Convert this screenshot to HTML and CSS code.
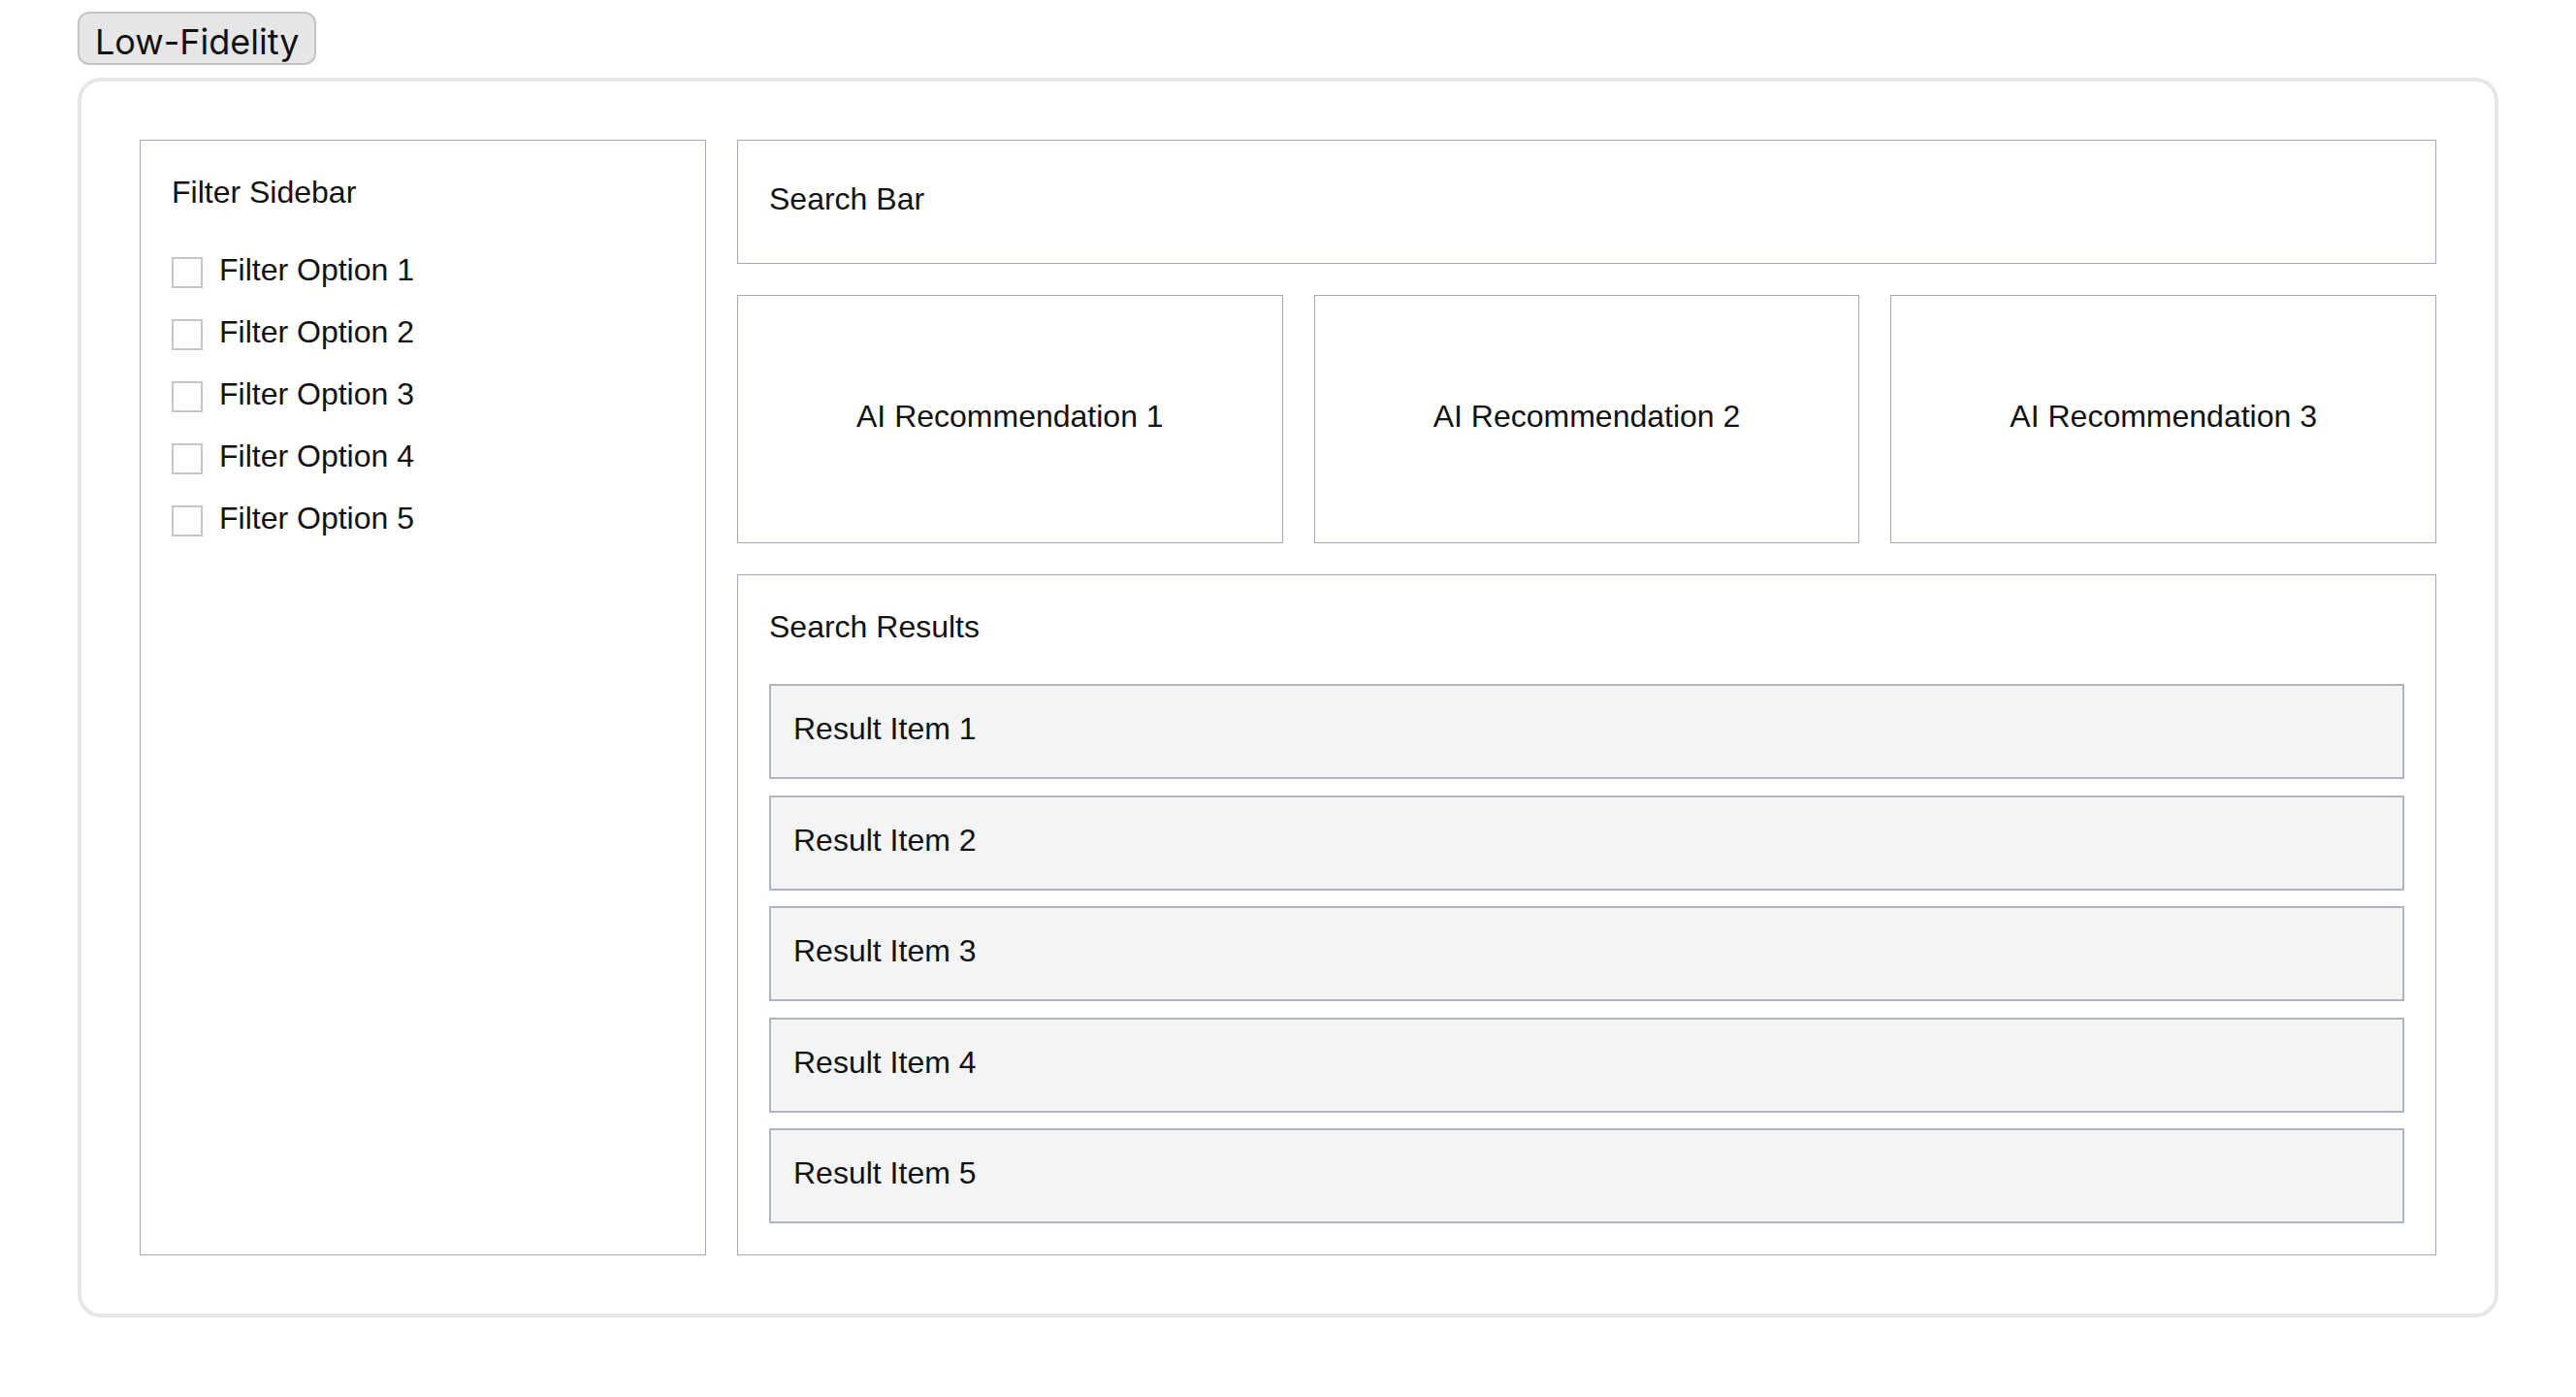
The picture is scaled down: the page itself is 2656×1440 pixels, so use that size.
FILE: index.html
```html
<!DOCTYPE html>
<html lang="en">
<head>
<meta charset="utf-8">
<title>Low-Fidelity</title>
<link rel="stylesheet" href="styles.css">
</head>
<body>
<div class="page">
  <div class="badge">Low-Fidelity</div>
  <div class="card">
    <div class="layout">
      <aside class="sidebar">
        <div class="title">Filter Sidebar</div>
        <div class="options">
          <label class="option"><span class="box"></span><span class="label">Filter Option 1</span></label>
          <label class="option"><span class="box"></span><span class="label">Filter Option 2</span></label>
          <label class="option"><span class="box"></span><span class="label">Filter Option 3</span></label>
          <label class="option"><span class="box"></span><span class="label">Filter Option 4</span></label>
          <label class="option"><span class="box"></span><span class="label">Filter Option 5</span></label>
        </div>
      </aside>
      <main class="main">
        <div class="search">Search Bar</div>
        <div class="recs">
          <div class="rec">AI Recommendation 1</div>
          <div class="rec">AI Recommendation 2</div>
          <div class="rec">AI Recommendation 3</div>
        </div>
        <section class="results">
          <div class="title">Search Results</div>
          <div class="items">
            <div class="item">Result Item 1</div>
            <div class="item">Result Item 2</div>
            <div class="item">Result Item 3</div>
            <div class="item">Result Item 4</div>
            <div class="item">Result Item 5</div>
          </div>
        </section>
      </main>
    </div>
  </div>
</div>
</body>
</html>
```
FILE: styles.css
```css
* { box-sizing: border-box; }

html, body {
  margin: 0;
  padding: 0;
  background: #ffffff;
}

body {
  font-family: "Liberation Sans", Arial, Helvetica, sans-serif;
  font-size: 32px;
  color: #111111;
}

.page {
  padding: 12px 80px 0 80px;
}

.badge {
  display: inline-flex;
  align-items: center;
  height: 55px;
  padding: 6px 16px 0 16px;
  border: 2px solid #c4c4c4;
  border-radius: 12px;
  background: #e6e6e6;
  font-family: Inter, "Noto Sans", sans-serif;
  font-size: 36px;
  line-height: 44px;
  color: #111111;
}

.card {
  margin-top: 13px;
  border: 4px solid #e6e6e6;
  border-radius: 24px;
  padding: 60px;
  background: #ffffff;
}

.layout {
  display: grid;
  grid-template-columns: 1fr 3fr;
  gap: 32px;
}

.sidebar {
  border: 1px solid #a3a8b6;
  padding: 32px;
}

.title {
  line-height: 43px;
  margin-bottom: 37px;
}

.options {
  display: flex;
  flex-direction: column;
  gap: 16px;
}

.option {
  display: flex;
  align-items: flex-start;
  height: 48px;
}

.box {
  width: 32px;
  height: 32px;
  margin-top: 8px;
  margin-right: 17px;
  border: 2px solid #c6c6c6;
  background: #ffffff;
  flex: none;
}

.label {
  line-height: 43px;
}

.main {
  display: flex;
  flex-direction: column;
  gap: 32px;
}

.search {
  height: 128px;
  border: 1px solid #a3a8b6;
  padding: 0 32px 5px 32px;
  display: flex;
  align-items: center;
  line-height: 43px;
}

.recs {
  display: grid;
  grid-template-columns: repeat(3, 1fr);
  gap: 32px;
}

.rec {
  height: 256px;
  border: 1px solid #a3a8b6;
  display: flex;
  align-items: center;
  justify-content: center;
  padding-bottom: 5px;
  line-height: 43px;
}

.results {
  border: 1px solid #a3a8b6;
  padding: 32px;
}

.items {
  display: flex;
  flex-direction: column;
  gap: 16.5px;
}

.item {
  height: 98px;
  border: 2px solid #b0b4c0;
  background: #f3f4f6;
  padding: 23px 23px 28px 23px;
  line-height: 43px;
}
```
